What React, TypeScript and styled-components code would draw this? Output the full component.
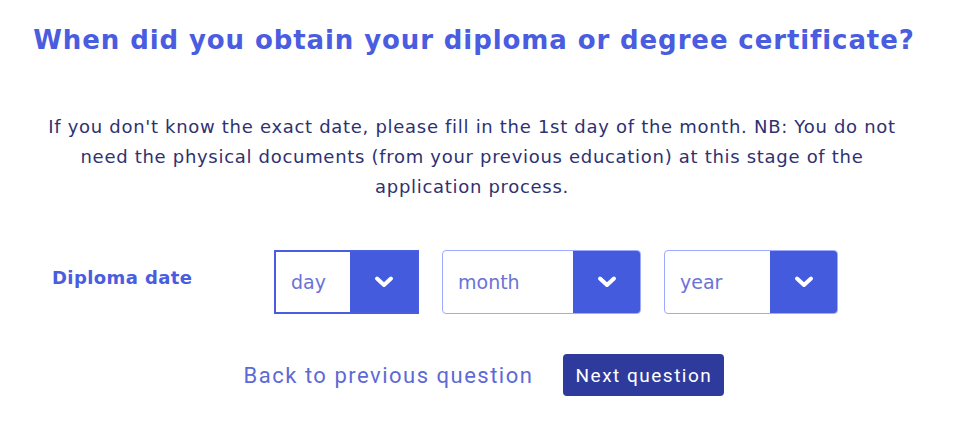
import React from "react";
import styled, { createGlobalStyle } from "styled-components";

const GlobalStyle = createGlobalStyle`
  body {
    margin: 0;
    background: #ffffff;
    font-family: "DejaVu Sans", "Noto Sans", sans-serif;
  }
`;

const Page = styled.div`
  width: 958px;
  height: 426px;
  display: flex;
  flex-direction: column;
  align-items: center;
  padding-top: 22px;
  box-sizing: border-box;
`;

const Title = styled.h1`
  margin: 0 0 0 -10px;
  font-family: "DejaVu Sans", sans-serif;
  font-size: 26px;
  font-weight: 700;
  color: #4a5ce0;
  letter-spacing: 0.9px;
  line-height: 36px;
  white-space: nowrap;
`;

const Intro = styled.p`
  margin: 54px 0 0 -14px;
  text-align: center;
  font-family: "DejaVu Sans", sans-serif;
  font-size: 18px;
  letter-spacing: 0.7px;
  line-height: 30px;
  color: #2f3170;
  white-space: nowrap;
`;

const FieldRow = styled.div`
  margin-top: 48px;
  width: 958px;
  display: flex;
  align-items: center;
  padding-left: 52px;
  box-sizing: border-box;
`;

const Label = styled.label`
  width: 222px;
  margin-top: -10px;
  font-family: "DejaVu Sans", sans-serif;
  font-size: 18px;
  font-weight: 700;
  letter-spacing: 0.4px;
  color: #4a5ce0;
`;

const Selects = styled.div`
  display: flex;
  gap: 23px;
`;

const SelectBox = styled.div<{ $width: number; $focused?: boolean }>`
  width: ${(p) => p.$width}px;
  height: 64px;
  display: flex;
  box-sizing: border-box;
  border: ${(p) => (p.$focused ? "2px solid #4a5ce0" : "1px solid #9eaaff")};
  border-radius: ${(p) => (p.$focused ? "0" : "4px")};
  overflow: hidden;
`;

const SelectText = styled.div`
  flex: 1;
  display: flex;
  align-items: center;
  padding-left: 15px;
  font-family: "DejaVu Sans", sans-serif;
  font-size: 19px;
  color: #6a72d8;
`;

const Toggle = styled.div`
  width: 67px;
  background: #435bdc;
  display: flex;
  align-items: center;
  justify-content: center;
`;

const Actions = styled.div`
  margin-top: 40px;
  display: flex;
  align-items: center;
  gap: 30px;
  margin-left: 10px;
`;

const BackLink = styled.a`
  font-family: Roboto, "Liberation Sans", sans-serif;
  font-size: 22px;
  color: #5d6ad6;
  letter-spacing: 1.5px;
  text-decoration: none;
`;

const NextButton = styled.button`
  height: 42px;
  width: 161px;
  border: none;
  border-radius: 4px;
  background: #2e3a9c;
  color: #ffffff;
  font-family: Roboto, "Liberation Sans", sans-serif;
  font-size: 19px;
  letter-spacing: 1.5px;
`;

const Chevron = () => (
  <svg width="20" height="14" viewBox="0 0 20 14">
    <path
      d="M3 3.5 L10 10 L17 3.5"
      fill="none"
      stroke="#ffffff"
      strokeWidth="4"
      strokeLinecap="round"
      strokeLinejoin="round"
    />
  </svg>
);

const Select = ({ text, width, focused }: { text: string; width: number; focused?: boolean }) => (
  <SelectBox $width={width} $focused={focused}>
    <SelectText>{text}</SelectText>
    <Toggle>
      <Chevron />
    </Toggle>
  </SelectBox>
);

export default function App() {
  return (
    <Page>
      <GlobalStyle />
      <Title>When did you obtain your diploma or degree certificate?</Title>
      <Intro>
        If you don't know the exact date, please fill in the 1st day of the month. NB: You do not
        <br />
        need the physical documents (from your previous education) at this stage of the
        <br />
        application process.
      </Intro>
      <FieldRow>
        <Label>Diploma date</Label>
        <Selects>
          <Select text="day" width={145} focused />
          <Select text="month" width={199} />
          <Select text="year" width={174} />
        </Selects>
      </FieldRow>
      <Actions>
        <BackLink href="#">Back to previous question</BackLink>
        <NextButton>Next question</NextButton>
      </Actions>
    </Page>
  );
}
